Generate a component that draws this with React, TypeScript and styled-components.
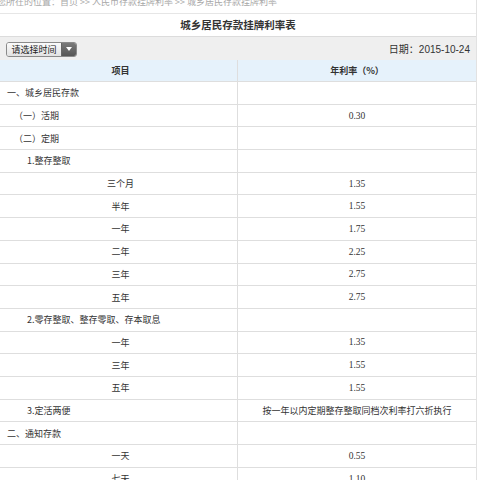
import React from "react";
import styled, { createGlobalStyle } from "styled-components";

const GlobalStyle = createGlobalStyle`
  html, body { margin: 0; padding: 0; background: #fff; overflow: hidden; }
  body { font-family: "Noto Sans CJK SC", "Noto Sans", sans-serif; color: #333; }
`;

const Page = styled.div`
  width: 477px;
  border-right: 1px solid #e2e2e2;
  box-sizing: border-box;
`;

const Breadcrumb = styled.div`
  margin-top: -6px;
  height: 19px;
  line-height: 15px;
  font-size: 9px;
  color: #a8a8a8;
  white-space: nowrap;
  margin-left: -3px;
  border-bottom: 1px solid #e6e6e6;
`;

const Title = styled.div`
  height: 22px;
  line-height: 22px;
  text-align: center;
  font-size: 10.5px;
  font-weight: bold;
  color: #333;
  border-bottom: 1px solid #dcdcdc;
`;

const Toolbar = styled.div`
  height: 23px;
  background: #efefef;
  display: flex;
  align-items: center;
  justify-content: space-between;
  padding: 0 6px;
`;

const Select = styled.div`
  display: flex;
  height: 13px;
  border: 1px solid #8a8a8a;
  border-radius: 3px;
  overflow: hidden;
  margin-top: 1px;
`;

const SelectLabel = styled.div`
  width: 54px;
  background: linear-gradient(#fbfbfb, #e2e2e2);
  font-size: 9px;
  line-height: 13px;
  text-align: center;
  color: #222;
`;

const SelectArrow = styled.div`
  width: 14px;
  background: linear-gradient(#7a7a7a, #555);
  border-left: 1px solid #666;
  display: flex;
  align-items: center;
  justify-content: center;
`;

const DateText = styled.div`
  font-family: "Liberation Sans", "Noto Sans CJK SC", sans-serif;
  font-size: 10px;
  color: #333;
`;

const Row = styled.div<{ $head?: boolean }>`
  display: grid;
  grid-template-columns: 238px 1fr;
  height: ${(p) => (p.$head ? "22px" : "22.7px")};
  background: ${(p) => (p.$head ? "#e6f2fb" : "#fff")};
  border-bottom: 1px solid #dedede;
  box-sizing: border-box;
  font-weight: ${(p) => (p.$head ? "bold" : "normal")};
`;

const Cell = styled.div<{ $indent?: number; $center?: boolean; $first?: boolean; $serif?: boolean }>`
  display: flex;
  align-items: center;
  justify-content: ${(p) => (p.$center ? "center" : "flex-start")};
  padding-left: ${(p) => (p.$center ? (p.$first ? 4 : 0) : p.$indent ?? 0)}px;
  border-right: ${(p) => (p.$first ? "1px solid #dedede" : "none")};
  font-family: ${(p) =>
    p.$serif
      ? '"Liberation Serif", "Noto Sans CJK SC", serif'
      : '"Noto Sans CJK SC", sans-serif'};
  font-size: ${(p) => (p.$serif ? "9.5px" : "9px")};
  color: #333;
  white-space: nowrap;
`;

type Item = { label: string; indent?: number; center?: boolean; rate?: string; note?: boolean };

const rows: Item[] = [
  { label: "一、城乡居民存款", indent: 7 },
  { label: "（一）活期", indent: 14, rate: "0.30" },
  { label: "（二）定期", indent: 14 },
  { label: "1.整存整取", indent: 27 },
  { label: "三个月", center: true, rate: "1.35" },
  { label: "半年", center: true, rate: "1.55" },
  { label: "一年", center: true, rate: "1.75" },
  { label: "二年", center: true, rate: "2.25" },
  { label: "三年", center: true, rate: "2.75" },
  { label: "五年", center: true, rate: "2.75" },
  { label: "2.零存整取、整存零取、存本取息", indent: 27 },
  { label: "一年", center: true, rate: "1.35" },
  { label: "三年", center: true, rate: "1.55" },
  { label: "五年", center: true, rate: "1.55" },
  { label: "3.定活两便", indent: 27, rate: "按一年以内定期整存整取同档次利率打六折执行", note: true },
  { label: "二、通知存款", indent: 7 },
  { label: "一天", center: true, rate: "0.55" },
  { label: "七天", center: true, rate: "1.10" },
];

export default function App() {
  return (
    <>
      <GlobalStyle />
      <Page>
        <Breadcrumb>您所在的位置：首页 &gt;&gt; 人民币存款挂牌利率 &gt;&gt; 城乡居民存款挂牌利率</Breadcrumb>
        <Title>城乡居民存款挂牌利率表</Title>
        <Toolbar>
          <Select>
            <SelectLabel>请选择时间</SelectLabel>
            <SelectArrow>
              <svg width="6" height="4" viewBox="0 0 6 4">
                <path d="M0 0 L6 0 L3 4 Z" fill="#fff" />
              </svg>
            </SelectArrow>
          </Select>
          <DateText>日期：2015-10-24</DateText>
        </Toolbar>
        <Row $head>
          <Cell $center $first>项目</Cell>
          <Cell $center>年利率（%）</Cell>
        </Row>
        {rows.map((r, i) => (
          <Row key={i}>
            <Cell $first $center={r.center} $indent={r.indent}>
              {r.label}
            </Cell>
            <Cell $center $serif={!r.note}>
              {r.rate ?? ""}
            </Cell>
          </Row>
        ))}
      </Page>
    </>
  );
}
